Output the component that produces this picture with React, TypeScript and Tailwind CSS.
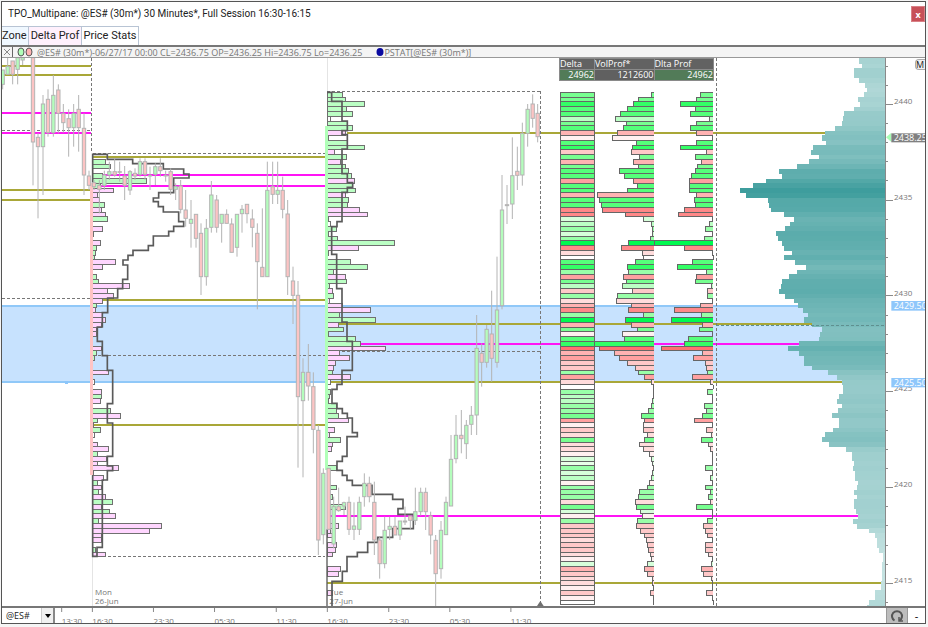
import React from "react";

// Chart units: three units make one pixel at the natural size.
const ROW_H = 14.37;
const ROW_0 = 277;
const rowY = (i: number) => ROW_0 + i * ROW_H;

const TONES: Record<string, string> = {
  a: "#00fa50", b: "#33ff66", c: "#55ff7a", d: "#77ff90", e: "#99ffa8", f: "#bbffc4", g: "#d6ffda", h: "#e8ffe8",
  w: "#ffffff", p: "#fff0f0", q: "#ffdcdc", r: "#ffc8c8", s: "#ffb2b2", t: "#ffa0a0", u: "#ff8888", v: "#ff7070",
};

// tone, left end of the volume bar, left end of the delta bar
const LADDER =
  "d304,450 d265,439 b250,391 c233,437 c211,421 f196,478 d229,439 c221,421 s202,438 p187,487 c259,439 b247,391 r245,468 d267,437 s251,454 d265,441 c208,435 c223,424 t250,417 c262,418 c233,418 s142,438 c148,434 c154,437 u157,403 u226,384 g280,486 f304,478 e308,466 g308,488 e301,463 a235,313 u215,403 q278,487 w281,489 c256,427 b232,381 e236,470 t220,439 d229,436 f217,483 r246,472 e202,472 q199,486 s245,451 u235,373 e280,454 a227,364 s244,458 d262,448 p217,488 c224,415 b133,402 v148,335 s193,456 t208,430 r232,466 r256,470 e265,472 t283,427 q304,480 w310,489 e310,472 f310,486 f308,488 e304,463 e295,468 d274,457 t284,433 p281,488 r280,469 q292,485 d283,453 q267,475 q280,480 p298,487 g304,488 h307,488 e310,466 g308,488 f304,482 p298,488 e292,466 e268,482 e266,475 q256,481 d260,439 g272,486 p276,488 e262,471 r260,460 r271,467 r284,472 q290,486 r292,466 r295,466 q302,475 p304,486 g292,485 s283,453 r292,460 q308,484 q308,488 p310,488 r302,469 p311,488 w311,489"
    .split(" ")
    .map((s) => {
      const [v, d] = s.slice(1).split(",").map(Number);
      return { tone: TONES[s[0]], vol: v + 1650, delta: d + 1650 };
    });

const TEAL_FIRST = -8;
const TEAL = [
  447, 447, 456, 432, 432, 447, 465, 471, 463, 445, 451, 433, 402, 400, 395, 376, 346, 336, 349, 308, 303, 326, 298, 262, 208, 216,
  168, 130, 89, 108, 175, 178, 183, 222, 252, 239, 224, 198, 204, 216, 222, 245, 222, 255, 288, 262, 237, 216, 213, 206, 224, 252,
  264, 278, 293, 282, 306, 336, 331, 326, 268, 234, 267, 281, 283, 306, 354, 382, 396, 400, 398, 388, 380, 397, 385, 367, 387, 387,
  369, 346, 336, 357, 408, 426, 426, 433, 428, 435, 436, 445, 441, 432, 441, 433, 433, 438, 444, 430, 441, 477, 495, 501, 502, 507,
  519, 519, 517, 515, 516, 516, 514, 512, 495, 494, 477, 471,
];
const tealFill = (w: number) => {
  const t = Math.pow(w / 436, 0.8);
  return `rgb(${Math.round(202 - 140 * t)},${Math.round(229 - 72 * t)},${Math.round(228 - 71 * t)})`;
};

// row, tone, right end
const SESSION_A =
  "14g315 15g331 17g307 18g438 19g300 20m341 21m292 22m298 23g313 24m303 25m316 26g323 28m307 29m281 31m301 32g288 33g286 34g284 35m347 36m307 38g290 39g295 40m388 41m323 42m341 43m307 44g288 45m286 46m307 47m316 48m303 49m290 50m290 53m303 54g290 55g283 58m326 60w283 62m304 63g305 64m301 66g332 67m362 68g292 69w280 70g301 71w283 73m292 74m326 75g292 76m319 77m292 78m356 79w280 80m311 81g292 82m304 83g295 84m316 85g338 86m303 87g328 88m347 89g295 90m485 91m448 92m303 93m304 95g286 96m316";
const SESSION_B =
  "0g1028 1g1037 2g1094 3g1040 4g1058 5w992 6g1042 7g1058 8m1035 9w985 10g1042 11g1094 12m1004 13g1040 14m1022 15g1037 16g1045 17g1053 18m1063 19g1058 20g1066 21m1037 22g1045 23g1043 24m1079 25m1101 26w984 27w990 28g1010 29w984 30g1012 31g1184 32m1076 33w984 35g1051 36g1103 37g1001 38m1037 39g1040 40g988 41m998 42g1001 43m989 44m1027 45m1111 46g1018 47g1127 48m1016 49g1030 50w984 51g1066 52g1082 53m1157 54m1018 55m1048 56m1007 57m1000 58g998 59m1051 60w991 62g990 63g988 64g986 65g1008 66g1008 67g1016 68m1045 70m1004 71m989 72g1022 73m997 74m995 78g1008 82g1010 84g998 86g1036 90m1014 91m992 92m997 94m1010 95m1007 96m997 99m1022 100m1016 104m998";

const CANDLES =
  "8,210,210,253,268,g 23,173,199,223,223,g 38,183,183,223,253,r 53,173,173,208,253,g 68,173,173,180,195,g 99,173,173,426,556,r 114,400,412,440,655,r 129,285,312,440,585,g 144,268,298,398,410,r 160,225,286,398,410,g 175,253,270,340,400,r 190,312,340,368,398,r 206,328,356,383,470,r 221,312,340,383,440,g 236,285,328,383,455,r 252,340,385,525,585,r 267,512,528,556,570,r 282,540,548,560,570,r 298,540,556,568,640,r 313,512,525,556,570,g 328,485,515,525,540,g 344,475,515,525,530,r 359,485,515,517,545,r 374,498,528,556,600,r 390,510,515,570,585,g 405,505,520,528,540,r 420,475,485,523,530,g 435,475,485,523,540,r 450,500,526,528,570,r 466,490,500,523,555,g 481,475,500,512,530,r 497,512,526,528,545,r 512,505,515,568,585,r 527,550,560,568,600,g 542,540,558,628,640,r 557,570,630,655,680,r 573,600,658,670,743,g 588,643,643,715,743,r 603,670,700,830,885,r 619,657,685,830,857,g 634,543,585,682,698,g 650,585,600,682,698,r 665,643,643,670,728,g 680,628,643,670,670,r 695,655,672,757,757,r 711,642,643,742,770,g 726,615,628,641,698,g 741,612,613,641,670,r 757,628,657,682,742,r 772,670,700,785,928,r 787,625,802,830,830,r 802,485,571,830,830,g 818,485,560,583,612,r 833,485,571,583,612,g 848,530,571,628,655,r 863,600,642,830,885,r 879,800,843,886,972,r 894,843,886,1190,1403,r 909,1075,1117,1202,1432,g 925,1032,1117,1158,1202,r 940,1117,1160,1288,1360,r 955,1275,1291,1620,1665,r 970,1405,1420,1604,1633,g 986,1405,1405,1588,1588,r 1001,1490,1520,1632,1645,g 1016,1463,1520,1532,1535,r 1032,1505,1508,1518,1545,g 1047,1490,1507,1588,1605,r 1062,1507,1578,1588,1620,g 1078,1490,1507,1588,1605,g 1093,1420,1450,1490,1520,g 1108,1430,1450,1490,1507,r 1123,1445,1507,1620,1665,r 1139,1610,1620,1691,1736,r 1154,1550,1591,1691,1705,g 1169,1550,1579,1588,1620,g 1185,1550,1579,1605,1605,r 1200,1563,1563,1605,1620,g 1215,1520,1563,1566,1575,r 1231,1547,1548,1561,1590,r 1246,1463,1535,1561,1575,g 1262,1463,1477,1535,1547,g 1277,1463,1477,1535,1590,r 1292,1535,1548,1605,1663,r 1307,1605,1621,1721,1818,r 1323,1563,1591,1706,1736,g 1338,1490,1507,1604,1604,g 1353,1305,1378,1518,1518,g 1368,1245,1306,1376,1390,g 1384,1230,1306,1316,1360,r 1399,1260,1276,1331,1377,g 1414,1218,1246,1273,1305,g 1430,945,1045,1245,1305,g 1445,1030,1060,1087,1160,r 1460,975,988,1087,1103,g 1475,872,1002,1075,1145,r 1491,770,930,1087,1103,g 1506,525,630,917,928,g 1521,555,614,617,672,r 1537,412,527,612,657,g 1552,440,514,526,570,r 1567,368,400,525,557,g 1583,312,328,400,440,g 1598,283,312,355,383,r 1613,312,340,410,427,r"
    .split(" ")
    .map((s) => {
      const [x, hi, top, bottom, lo, dir] = s.split(",");
      return { x: +x, hi: +hi, top: +top, bottom: +bottom, lo: +lo, up: dir === "g" };
    });

const TIME_PROFILE_A =
  "278,548 278,463 322,463 322,478 398,478 398,491 490,491 490,507 551,507 551,522 567,522 567,534 521,534 521,578 476,578 476,594 460,594 460,605 475,605 475,620 490,620 490,636 536,636 536,665 551,665 551,679 521,679 521,694 506,694 506,708 460,708 460,737 445,737 445,751 399,751 399,766 384,766 384,780 369,780 369,795 383,795 383,838 368,838 368,866 353,866 353,894 323,894 323,938 307,938 307,981 292,981 292,1024 307,1024 307,1067 322,1067 322,1111 338,1111 338,1211 322,1211 322,1269 338,1269 338,1369 322,1369 322,1398 338,1398 338,1412 322,1412 322,1440 307,1440 307,1642 291,1642 291,1669 278,1669 278,1426";
const TIME_PROFILE_B =
  "981,277 995,277 995,304 1026,304 1026,363 1042,363 1042,392 1026,392 1026,404 1042,404 1042,447 1026,447 1026,521 1042,521 1042,548 1058,548 1058,562 1042,562 1042,577 1026,577 1026,665 1011,665 1011,680 995,680 995,763 1010,763 1010,866 1026,866 1026,966 1041,966 1041,1024 1057,1024 1057,1111 1026,1111 1026,1153 1011,1153 1011,1168 996,1168 996,1210 1011,1210 1011,1226 1027,1226 1027,1240 1042,1240 1042,1254 1057,1254 1057,1298 1072,1298 1072,1310 1041,1310 1041,1369 1027,1369 1027,1384 1011,1384 1011,1411 1027,1411 1027,1426 1041,1426 1041,1441 1057,1441 1057,1456 1116,1456 1116,1483 1178,1483 1178,1498 1209,1498 1209,1526 1194,1526 1194,1543 1240,1543 1240,1586 1178,1586 1178,1612 1133,1612 1133,1627 1103,1627 1103,1657 1072,1657 1072,1670 1041,1670 1041,1714 1027,1714 1027,1744 996,1744 996,1818";

const OLIVE_LINES = [
  [6, 273, 198], [6, 273, 225], [6, 273, 570], [6, 273, 600], [278, 975, 470], [278, 975, 901], [278, 975, 1274],
  [1041, 2478, 399], [981, 2436, 973], [981, 2526, 1146], [981, 2646, 1749],
];
const MAGENTA_LINES = [
  [6, 273, 340], [6, 273, 399], [278, 975, 526], [278, 975, 557], [1080, 2397, 1032], [981, 2574, 1548],
];
const DASHES = [
  [6, 391, 273, 391], [6, 895, 273, 895], [278, 460, 975, 460], [274, 174, 274, 460], [981, 274, 1621, 274],
  [1621, 274, 1621, 1818], [278, 1066, 975, 1066], [981, 1054, 1621, 1054], [278, 1670, 975, 1670], [2149, 174, 2149, 1818],
];

function Histogram({ rows, x }: { rows: string; x: number }) {
  return (
    <g stroke="#707070" strokeWidth={3}>
      {rows.split(" ").map((s) => {
        const m = /^(\d+)([gmw])(\d+)$/.exec(s)!;
        const fill = m[2] === "g" ? "#bbffc4" : m[2] === "m" ? "#ffd6ff" : "#ffffff";
        return <rect key={s} x={x} y={rowY(+m[1])} width={+m[3] - x} height={ROW_H} fill={fill} />;
      })}
    </g>
  );
}

function Chart() {
  return (
    <svg viewBox="6 174 2769 1644" className="block h-auto w-full font-['Open_Sans','Noto_Sans',sans-serif]" role="img" aria-label="@ES# 30 minute price chart">
      <g shapeRendering="crispEdges">
        <rect x={6} y={916} width={2640} height={230} fill="#c7e2fe" />
        <path d="M6 917H2646M6 1145H2646" stroke="#90c8f8" strokeWidth={5} />
        <rect x={195} y={1143} width={9} height={9} fill="#8cc6fb" />
        <path d="M277 1670V1818M981 174V277" stroke="#e4e4e4" strokeWidth={3} />

        {OLIVE_LINES.map(([a, b, y]) => (
          <line key={`o${a}-${y}`} x1={a} x2={b} y1={y} y2={y} stroke="#a9a738" strokeWidth={6} />
        ))}
        {MAGENTA_LINES.map(([a, b, y]) => (
          <line key={`m${y}`} x1={a} x2={b} y1={y} y2={y} stroke="#ff14f5" strokeWidth={6} />
        ))}
        {DASHES.map(([x1, y1, x2, y2]) => (
          <line key={`${x1}-${y1}-${x2}`} x1={x1} y1={y1} x2={x2} y2={y2} stroke="#777" strokeWidth={3} strokeDasharray="9 6" />
        ))}

        <Histogram rows={SESSION_A} x={278} />
        <Histogram rows={SESSION_B} x={981} />
        <rect x={271} y={548} width={8} height={877} fill="#ffc4c4" />
        <rect x={975} y={378} width={8} height={1032} fill="#b0ffb8" />
      </g>

      <text x={285} y={1784} fontSize={24} fill="#777">Mon</text>
      <text x={285} y={1811} fontSize={24} fill="#777">26-Jun</text>
      <text x={988} y={1784} fontSize={24} fill="#777">Tue</text>
      <text x={988} y={1811} fontSize={24} fill="#777">27-Jun</text>

      <g fill="none" stroke="#5a5a5a" strokeWidth={5}>
        <polyline points={TIME_PROFILE_A} />
        <polyline points={TIME_PROFILE_B} />
        <path d="M981 1588V1818" strokeWidth={4} />
      </g>

      <g stroke="#b4b4b4" strokeWidth={3}>
        {CANDLES.map((c) => (
          <g key={c.x}>
            <line x1={c.x} x2={c.x} y1={c.hi} y2={c.lo} />
            <rect x={c.x - 5} y={c.top} width={10} height={c.bottom - c.top} fill={c.up ? "#b4fdbc" : "#fcc4c4"} />
          </g>
        ))}
      </g>

      <g shapeRendering="crispEdges" stroke="#666" strokeWidth={3}>
        {LADDER.map((r, i) => (
          <g key={i} fill={r.tone}>
            <rect x={1680} y={rowY(i)} width={102} height={ROW_H} />
            <path d={`M1961 ${rowY(i)}H${r.vol}v${ROW_H}H1961`} />
            <path d={`M2139 ${rowY(i)}H${r.delta}v${ROW_H}H2139`} />
          </g>
        ))}
      </g>

      <g shapeRendering="crispEdges">
        {TEAL.map((x, i) => (
          <rect key={i} x={x + 2130} y={rowY(i + TEAL_FIRST)} width={526 - x} height={ROW_H + 1} fill={tealFill(525 - x)} />
        ))}
        <path d="M2149 976H2655" stroke="#5f8f8f" strokeWidth={3} strokeDasharray="9 6" />
        <rect x={2656} y={174} width={119} height={1644} fill="#ffffff" />
        <path d="M2657 174V1818" stroke="#8a8a8a" strokeWidth={3} />
        {Array.from({ length: 29 }, (_, i) => {
          const price = 2442 - i;
          const y = 313 + (i - 2) * 57.48;
          return <line key={price} x1={2657} x2={price % 5 ? 2664 : 2680} y1={y} y2={y} stroke="#8a8a8a" strokeWidth={3} />;
        })}
      </g>
      <g fontSize={24} fill="#777">
        {[2440, 2435, 2430, 2425, 2420, 2415].map((p, i) => (
          <text key={p} x={2682} y={312 + i * 287.4}>{p}</text>
        ))}
      </g>
      <path d="M2658 412l16-14v28z" fill="#a8fdb4" />
      <path d="M1621 1803l10 15h-20z" fill="#707070" />
      <rect x={2674} y={400} width={101} height={27} fill="#808080" />
      <rect x={2674} y={903} width={101} height={29} fill="#8fc7fb" />
      <rect x={2674} y={1134} width={101} height={28} fill="#8fc7fb" />
      <g fontSize={27} fill="#ffffff">
        <text x={2681} y={423}>2438.25</text>
        <text x={2681} y={927}>2429.50</text>
        <text x={2681} y={1158}>2425.50</text>
      </g>
    </svg>
  );
}

const TIMES: [number, string][] = [
  [185, "13:30"], [277, "16:30"], [460, "23:30"], [643, "05:30"], [828, "11:30"], [981, "16:30"], [1165, "23:30"], [1348, "05:30"], [1531, "11:30"],
];

export default function App() {
  return (
    <div className="bg-[#f5f5f5] pt-px pr-0.5 pb-[3px] pl-px font-['Open_Sans','Noto_Sans',sans-serif]">
      <main className="overflow-hidden border border-[#555] bg-white">
        <header className="flex h-6 items-start justify-between">
          <h1 className="pt-1 pl-1.5 font-['Roboto',sans-serif] text-[10px] leading-4 text-[#222]">TPO_Multipane: @ES# (30m*) 30 Minutes*, Full Session 16:30-16:15</h1>
          <button aria-label="Close" className="mt-1 flex h-4 w-[14px] items-center justify-center border border-[#d98086] bg-[#c75058] text-[9px] leading-none font-bold text-white">
            x
          </button>
        </header>

        <nav className="flex h-[19px] items-stretch font-['Roboto',sans-serif] text-[11px] leading-4 whitespace-nowrap text-[#222]">
          <button className="w-[27px] border-t border-r border-[#b8c4d4] bg-[#f0f8ff] text-left">Zone</button>
          <button className="w-[53px] border-t border-r border-[#b8c4d4] bg-[#fff0fc]">Delta Prof</button>
          <button className="w-[57px] border-t border-r border-[#b8c4d4] bg-white">Price Stats</button>
        </nav>

        <div className="flex h-[13px] items-center border-t-2 border-b border-t-[#777] border-b-[#999] bg-[#f4f4f4] text-[9px] leading-none text-[#777]">
          <button aria-label="Close study" className="flex h-full w-[11px] items-center justify-center border-r border-[#666]">
            <svg viewBox="0 0 8 8" className="size-2" stroke="#888" fill="none"><path d="M1 1l6 6M7 1L1 7" /></svg>
          </button>
          <svg viewBox="0 0 16 10" className="ml-1 h-2.5 w-4" stroke="#555">
            <ellipse cx="4" cy="5" rx="3" ry="4" fill="#b0ffb8" />
            <ellipse cx="12" cy="5" rx="3" ry="4" fill="#ffb4b4" />
          </svg>
          <span className="ml-1 whitespace-nowrap">@ES# (30m*)-06/27/17 00:00 CL=2436.75 OP=2436.25 Hi=2436.75 Lo=2436.25</span>
          <svg viewBox="0 0 8 10" className="ml-3.5 h-2.5 w-2"><ellipse cx="4" cy="5" rx="3.5" ry="4" fill="#0a0aa0" /></svg>
          <span className="whitespace-nowrap">PSTAT[@ES# (30m*)]</span>
        </div>

        <section className="relative">
          <Chart />
          <table className="absolute top-0 left-[557px] w-[155px] table-fixed border-collapse text-[9px] leading-[10px] text-white">
            <thead>
              <tr className="h-[11px] bg-[#626262] text-left">
                <th className="w-[35px] border border-[#8a8a8a] p-0 font-normal">Delta</th>
                <th className="border border-[#8a8a8a] p-0 font-normal">VolProf*</th>
                <th className="border border-[#8a8a8a] p-0 font-normal">Dlta Prof</th>
              </tr>
            </thead>
            <tbody>
              <tr className="h-[11px] text-right">
                <td className="border border-[#8a8a8a] bg-[#527b58] p-0">24962</td>
                <td className="border border-[#8a8a8a] bg-[#606060] p-0">1212600</td>
                <td className="border border-[#8a8a8a] bg-[#527b58] p-0">24962</td>
              </tr>
            </tbody>
          </table>
          <button className="absolute top-px right-0 h-[11px] w-2.5 rounded-l-sm border border-r-0 border-[#aaa] bg-[#f0f0f0] text-left text-[9px] leading-[9px] text-[#222]">M</button>
        </section>

        <footer className="flex h-[17px] border-t-2 border-[#777]">
          <div className="relative flex w-[53px] shrink-0 border-r-2 border-[#888]">
            <select aria-label="Symbol" className="w-full appearance-none bg-white pl-1 text-[9px] leading-[14px] text-[#222]">
              <option>@ES#</option>
            </select>
            <span className="pointer-events-none absolute inset-y-0 right-0 flex w-3 items-center justify-center border-l border-[#ccc] bg-[#f0f0f0]">
              <svg viewBox="0 0 6 4" className="h-1 w-1.5"><path d="M0 0h6L3 4z" fill="#000" /></svg>
            </span>
          </div>
          <svg viewBox="165 1824 2490 45" className="min-w-0 flex-1" preserveAspectRatio="xMinYMin slice" role="img" aria-label="Time axis">
            {TIMES.map(([x, label]) => (
              <g key={x}>
                <path d={`M${x} 1824v12`} stroke="#888" strokeWidth={3} />
                <text x={x} y={1872} fontSize={24} fill="#777">{label}</text>
              </g>
            ))}
          </svg>
          <button aria-label="Reload" className="flex w-[22px] items-center justify-center border-x border-[#999] bg-[#bdbdbd]">
            <svg viewBox="0 0 14 14" className="size-3.5" fill="none" stroke="#555" strokeWidth="2">
              <path d="M4.500 11.500A5 5 0 1 1 9.500 11.500" />
              <path d="M9 8v4h4" strokeWidth="1.500" />
            </svg>
          </button>
          <button aria-label="Zoom out" className="w-[17px] text-[11px] leading-4 text-black">-</button>
        </footer>
      </main>
    </div>
  );
}
